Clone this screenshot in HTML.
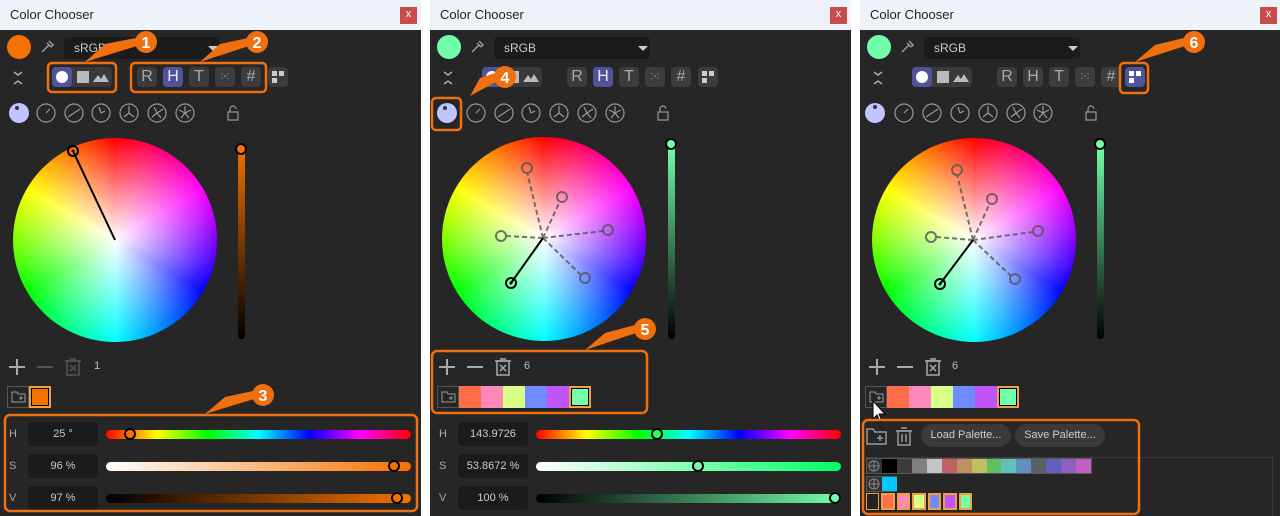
<!DOCTYPE html>
<html><head><meta charset="utf-8"><style>
*{margin:0;padding:0;box-sizing:border-box}
body{width:1280px;height:516px;background:#fff;position:relative;overflow:hidden;font-family:"Liberation Sans",sans-serif}
.p{position:absolute;top:0;width:421px;height:516px;background:#262626;overflow:hidden}
.p *{position:absolute}
.tb{left:0;top:0;width:421px;height:30px;background:#eef3f9;color:#222;font-size:13px;line-height:30px;padding-left:10px}
.cl{left:400px;top:7px;width:17px;height:17px;background:#c74d4d;color:#fff;font-size:11px;line-height:15px;text-align:center}
.cc{left:7px;top:35px;width:24px;height:24px;border-radius:50%}
.dd{left:64px;top:37px;width:156px;height:22px;background:#1b1b1b;border-radius:4px;color:#ccc;font-size:12px;line-height:22px;padding-left:10px}
.dd i{left:144px;top:9px;width:0;height:0;border-left:5px solid transparent;border-right:5px solid transparent;border-top:5px solid #ccc}
.seg{left:52px;top:67px;width:60px;height:20px;background:#3a3a3a;border-radius:4px}
.seg b{left:0;top:0;width:20px;height:20px;background:#4f5499;border-radius:4px}
.btn{top:67px;width:20px;height:20px;background:#3c3c3c;border-radius:4px;color:#aaa;font-size:16px;line-height:20px;text-align:center}
.act{background:#4f5499;color:#e8e8ff}
.lbl{left:9px;color:#aaa;font-size:11px}
.inp{left:28px;width:70px;height:24px;background:#1b1b1b;border-radius:4px;color:#ccc;font-size:11px;line-height:24px;text-align:center}
.tr{left:106px;width:305px;height:9px;border-radius:5px}
.th{width:12px;height:12px;border-radius:50%;border:2px solid #000}
.wh{width:204px;height:204px;border-radius:50%;background:radial-gradient(closest-side,#fff,rgba(255,255,255,0)),conic-gradient(red,#f0f,#00f,#0ff,#0f0,#ff0,red)}
.vb{left:238px;top:145px;width:7px;height:194px;border-radius:4px}
.sw{top:386px;width:22px;height:22px}
.cnt{top:360px;color:#bbb;font-size:11px}
svg{overflow:visible}
</style></head><body>

<!-- PANEL 1 -->
<div class="p" style="left:0">
<div class="tb">Color Chooser</div><div class="cl">x</div>
<div class="cc" style="background:#f57200"></div>
<svg style="left:40px;top:40px" width="14" height="14"><path d="M2 12 L9 5 M7 3 L11 7 M9 1 L13 5 L11 7" stroke="#999" stroke-width="1.5" fill="none"/></svg>
<div class="dd">sRGB<i></i></div>
<svg style="left:12px;top:70px" width="12" height="16"><path d="M2 2 L6 5 L10 2 M2 14 L6 11 L10 14" stroke="#aaa" stroke-width="1.5" fill="none"/></svg>
<div class="seg"><b></b><div style="left:4px;top:4px;width:12px;height:12px;border-radius:50%;background:#fff"></div><div style="left:25px;top:4px;width:12px;height:12px;background:#bbb"></div><svg style="left:41px;top:5px" width="16" height="10"><path d="M0 10 L5 3 L8 7 L11 2 L16 10Z" fill="#bbb"/></svg></div>
<div class="btn" style="left:137px">R</div><div class="btn act" style="left:163px">H</div><div class="btn" style="left:189px">T</div><div class="btn" style="left:215px;font-size:10px">:-:</div><div class="btn" style="left:241px">#</div>
<div class="btn" style="left:268px"><svg style="left:4px;top:4px" width="12" height="12"><rect x="0" y="0" width="5" height="5" fill="#ccc"/><rect x="7" y="0" width="5" height="5" fill="#ccc"/><rect x="0" y="7" width="5" height="5" fill="#ccc"/></svg></div>
<svg style="left:0;top:100px" width="260" height="26"><circle cx="19" cy="13" r="10" fill="#c0c4ff"/><circle cx="17" cy="8" r="2" fill="#334"/>
<g fill="none" stroke="#999" stroke-width="1.2"><circle cx="46" cy="13" r="9"/><circle cx="74" cy="13" r="9"/><circle cx="101" cy="13" r="9"/><circle cx="129" cy="13" r="9"/><circle cx="157" cy="13" r="9"/><circle cx="185" cy="13" r="9"/><path d="M46 13 L50 9 M68 17 L80 9 M101 13 L99 7 M101 13 L105 11 M129 13 L129 6 M129 13 L124 17 M129 13 L134 17 M157 13 L154 7 M157 13 L163 9 M157 13 L152 17 M157 13 L161 18 M185 13 L185 6 M185 13 L191 10 M185 13 L179 10 M185 13 L181 18 M185 13 L189 18"/><rect x="228" y="12" width="10" height="8"/><path d="M230 12 V9 A3 3 0 0 1 236 9"/></g></svg>
<div class="wh" style="left:13px;top:138px"></div>
<svg style="left:0;top:0" width="260" height="350"><line x1="73" y1="151" x2="115" y2="240" stroke="#000" stroke-width="2"/><circle cx="73" cy="151" r="5" fill="none" stroke="#000" stroke-width="2"/><circle cx="73" cy="151" r="1.5"/></svg>
<div class="vb" style="background:linear-gradient(#f57200,#000)"></div>
<div class="th" style="left:235px;top:143px;background:#f57200"></div>
<svg style="left:8px;top:358px" width="90" height="18"><path d="M1 9 H17 M9 1 V17" stroke="#aaa" stroke-width="2"/><path d="M29 9 H45" stroke="#555" stroke-width="2"/><g stroke="#555" stroke-width="1.5" fill="none"><rect x="59" y="3" width="12" height="14"/><path d="M57 3 H73 M62 1 H68 M62 7 L68 13 M68 7 L62 13"/></g></svg>
<div class="cnt" style="left:94px">1</div>
<div class="sw" style="left:7px;border:1px solid #555;background:#262626"><svg style="left:3px;top:4px" width="15" height="12"><path d="M1 1 H6 L7 3 H14 V11 H1Z M8 7 H12 M10 5 V9" stroke="#999" fill="none"/></svg></div>
<div class="sw" style="left:29px;background:#f57200;border:2px solid #f0a040;box-shadow:inset 0 0 0 1px #000"></div>
<div class="lbl" style="top:428px">H</div><div class="inp" style="top:422px">25 °</div><div class="tr" style="top:430px;background:linear-gradient(90deg,red,#ff0,#0f0,#0ff,#00f,#f0f,red)"></div><div class="th" style="left:124px;top:428px;background:#f57200"></div>
<div class="lbl" style="top:460px">S</div><div class="inp" style="top:454px">96 %</div><div class="tr" style="top:462px;background:linear-gradient(90deg,#fff,#f57200)"></div><div class="th" style="left:388px;top:460px;background:#f57200"></div>
<div class="lbl" style="top:492px">V</div><div class="inp" style="top:486px">97 %</div><div class="tr" style="top:494px;background:linear-gradient(90deg,#000,#f57200)"></div><div class="th" style="left:391px;top:492px;background:#f57200"></div>
</div>

<!-- PANEL 2 -->
<div class="p" style="left:430px">
<div class="tb">Color Chooser</div><div class="cl">x</div>
<div class="cc" style="background:#73ffaa"></div>
<svg style="left:40px;top:40px" width="14" height="14"><path d="M2 12 L9 5 M7 3 L11 7 M9 1 L13 5 L11 7" stroke="#999" stroke-width="1.5" fill="none"/></svg>
<div class="dd">sRGB<i></i></div>
<svg style="left:12px;top:70px" width="12" height="16"><path d="M2 2 L6 5 L10 2 M2 14 L6 11 L10 14" stroke="#aaa" stroke-width="1.5" fill="none"/></svg>
<div class="seg"><b></b><div style="left:4px;top:4px;width:12px;height:12px;border-radius:50%;background:#fff"></div><div style="left:25px;top:4px;width:12px;height:12px;background:#bbb"></div><svg style="left:41px;top:5px" width="16" height="10"><path d="M0 10 L5 3 L8 7 L11 2 L16 10Z" fill="#bbb"/></svg></div>
<div class="btn" style="left:137px">R</div><div class="btn act" style="left:163px">H</div><div class="btn" style="left:189px">T</div><div class="btn" style="left:215px;font-size:10px">:-:</div><div class="btn" style="left:241px">#</div>
<div class="btn" style="left:268px"><svg style="left:4px;top:4px" width="12" height="12"><rect x="0" y="0" width="5" height="5" fill="#ccc"/><rect x="7" y="0" width="5" height="5" fill="#ccc"/><rect x="0" y="7" width="5" height="5" fill="#ccc"/></svg></div>
<svg style="left:0;top:100px" width="260" height="26"><circle cx="17" cy="13" r="10" fill="#c0c4ff"/><circle cx="15" cy="8" r="2" fill="#334"/>
<g fill="none" stroke="#999" stroke-width="1.2"><circle cx="46" cy="13" r="9"/><circle cx="74" cy="13" r="9"/><circle cx="101" cy="13" r="9"/><circle cx="129" cy="13" r="9"/><circle cx="157" cy="13" r="9"/><circle cx="185" cy="13" r="9"/><path d="M46 13 L50 9 M68 17 L80 9 M101 13 L99 7 M101 13 L105 11 M129 13 L129 6 M129 13 L124 17 M129 13 L134 17 M157 13 L154 7 M157 13 L163 9 M157 13 L152 17 M157 13 L161 18 M185 13 L185 6 M185 13 L191 10 M185 13 L179 10 M185 13 L181 18 M185 13 L189 18"/><rect x="228" y="12" width="10" height="8"/><path d="M230 12 V9 A3 3 0 0 1 236 9"/></g></svg>
<div class="wh" style="left:12px;top:137px"></div>
<svg style="left:0;top:0" width="260" height="350"><g stroke="#555" stroke-width="2" fill="none" opacity=".8"><path stroke-dasharray="5 3" d="M113 238 L97 172 M113 238 L130 201 M113 238 L76 236 M113 238 L173 231 M113 238 L151 275"/><circle cx="97" cy="168" r="5"/><circle cx="132" cy="197" r="5"/><circle cx="71" cy="236" r="5"/><circle cx="178" cy="230" r="5"/><circle cx="155" cy="278" r="5"/></g><line x1="81" y1="283" x2="113" y2="238" stroke="#000" stroke-width="2"/><circle cx="81" cy="283" r="5" fill="none" stroke="#000" stroke-width="2"/><circle cx="81" cy="283" r="1.5"/></svg>
<div class="vb" style="background:linear-gradient(#73ffaa,#000)"></div>
<div class="th" style="left:235px;top:138px;background:#73ffaa"></div>
<svg style="left:8px;top:358px" width="90" height="18"><path d="M1 9 H17 M9 1 V17 M29 9 H45" stroke="#aaa" stroke-width="2"/><g stroke="#aaa" stroke-width="1.5" fill="none"><rect x="59" y="3" width="12" height="14"/><path d="M57 3 H73 M62 1 H68 M62 7 L68 13 M68 7 L62 13"/></g></svg>
<div class="cnt" style="left:94px">6</div>
<div class="sw" style="left:7px;border:1px solid #555;background:#262626"><svg style="left:3px;top:4px" width="15" height="12"><path d="M1 1 H6 L7 3 H14 V11 H1Z M8 7 H12 M10 5 V9" stroke="#999" fill="none"/></svg></div>
<div class="sw" style="left:29px;background:#ff6e48"></div><div class="sw" style="left:51px;background:#ff88bb"></div><div class="sw" style="left:73px;background:#d8ff88"></div><div class="sw" style="left:95px;background:#6e8cff"></div><div class="sw" style="left:117px;background:#c055ff"></div>
<div class="sw" style="left:139px;background:#73ffaa;border:2px solid #f0a040;box-shadow:inset 0 0 0 1px #000"></div>
<div class="lbl" style="top:428px">H</div><div class="inp" style="top:422px">143.9726</div><div class="tr" style="top:430px;background:linear-gradient(90deg,red,#ff0,#0f0,#0ff,#00f,#f0f,red)"></div><div class="th" style="left:221px;top:428px;background:#2f6"></div>
<div class="lbl" style="top:460px">S</div><div class="inp" style="top:454px">53.8672 %</div><div class="tr" style="top:462px;background:linear-gradient(90deg,#fff,#7fa 55%,#0f6)"></div><div class="th" style="left:262px;top:460px;background:#73ffaa"></div>
<div class="lbl" style="top:492px">V</div><div class="inp" style="top:486px">100 %</div><div class="tr" style="top:494px;background:linear-gradient(90deg,#000,#73ffaa)"></div><div class="th" style="left:399px;top:492px;background:#73ffaa"></div>
</div>

<!-- PANEL 3 -->
<div class="p" style="left:860px;width:420px">
<div class="tb" style="width:420px">Color Chooser</div><div class="cl">x</div>
<div class="cc" style="background:#73ffaa"></div>
<svg style="left:40px;top:40px" width="14" height="14"><path d="M2 12 L9 5 M7 3 L11 7 M9 1 L13 5 L11 7" stroke="#999" stroke-width="1.5" fill="none"/></svg>
<div class="dd">sRGB<i></i></div>
<svg style="left:12px;top:70px" width="12" height="16"><path d="M2 2 L6 5 L10 2 M2 14 L6 11 L10 14" stroke="#aaa" stroke-width="1.5" fill="none"/></svg>
<div class="seg"><b></b><div style="left:4px;top:4px;width:12px;height:12px;border-radius:50%;background:#fff"></div><div style="left:25px;top:4px;width:12px;height:12px;background:#bbb"></div><svg style="left:41px;top:5px" width="16" height="10"><path d="M0 10 L5 3 L8 7 L11 2 L16 10Z" fill="#bbb"/></svg></div>
<div class="btn" style="left:137px">R</div><div class="btn" style="left:163px">H</div><div class="btn" style="left:189px">T</div><div class="btn" style="left:215px;font-size:10px">:-:</div><div class="btn" style="left:241px">#</div>
<div class="btn act" style="left:265px"><svg style="left:4px;top:4px" width="12" height="12"><rect x="0" y="0" width="5" height="5" fill="#fff"/><rect x="7" y="0" width="5" height="5" fill="#fff"/><rect x="0" y="7" width="5" height="5" fill="#fff"/></svg></div>
<svg style="left:0;top:100px" width="260" height="26"><circle cx="15" cy="13" r="10" fill="#c0c4ff"/><circle cx="15" cy="7" r="2" fill="#334"/>
<g fill="none" stroke="#999" stroke-width="1.2"><circle cx="44" cy="13" r="9"/><circle cx="72" cy="13" r="9"/><circle cx="100" cy="13" r="9"/><circle cx="128" cy="13" r="9"/><circle cx="156" cy="13" r="9"/><circle cx="183" cy="13" r="9"/><path d="M44 13 L48 9 M66 17 L78 9 M100 13 L98 7 M100 13 L104 11 M128 13 L128 6 M128 13 L123 17 M128 13 L133 17 M156 13 L153 7 M156 13 L162 9 M156 13 L151 17 M156 13 L160 18 M183 13 L183 6 M183 13 L189 10 M183 13 L177 10 M183 13 L179 18 M183 13 L187 18"/><rect x="226" y="12" width="10" height="8"/><path d="M228 12 V9 A3 3 0 0 1 234 9"/></g></svg>
<div class="wh" style="left:12px;top:138px"></div>
<svg style="left:0;top:0" width="260" height="350"><g stroke="#555" stroke-width="2" fill="none" opacity=".8"><path stroke-dasharray="5 3" d="M113 240 L97 174 M113 240 L130 203 M113 240 L76 237 M113 240 L173 232 M113 240 L151 276"/><circle cx="97" cy="170" r="5"/><circle cx="132" cy="199" r="5"/><circle cx="71" cy="237" r="5"/><circle cx="178" cy="231" r="5"/><circle cx="155" cy="279" r="5"/></g><line x1="80" y1="284" x2="113" y2="240" stroke="#000" stroke-width="2"/><circle cx="80" cy="284" r="5" fill="none" stroke="#000" stroke-width="2"/><circle cx="80" cy="284" r="1.5"/></svg>
<div class="vb" style="left:237px;background:linear-gradient(#73ffaa,#000)"></div>
<div class="th" style="left:234px;top:138px;background:#73ffaa"></div>
<svg style="left:8px;top:358px" width="90" height="18"><path d="M1 9 H17 M9 1 V17 M29 9 H45" stroke="#aaa" stroke-width="2"/><g stroke="#aaa" stroke-width="1.5" fill="none"><rect x="59" y="3" width="12" height="14"/><path d="M57 3 H73 M62 1 H68 M62 7 L68 13 M68 7 L62 13"/></g></svg>
<div class="cnt" style="left:92px">6</div>
<div class="sw" style="left:5px;border:1px solid #555;background:#262626"><svg style="left:3px;top:4px" width="15" height="12"><path d="M1 1 H6 L7 3 H14 V11 H1Z M8 7 H12 M10 5 V9" stroke="#999" fill="none"/></svg></div>
<div class="sw" style="left:27px;background:#ff6e48"></div><div class="sw" style="left:49px;background:#ff88bb"></div><div class="sw" style="left:71px;background:#d8ff88"></div><div class="sw" style="left:93px;background:#6e8cff"></div><div class="sw" style="left:115px;background:#c055ff"></div>
<div class="sw" style="left:137px;background:#73ffaa;border:2px solid #f0a040;box-shadow:inset 0 0 0 1px #000"></div>
<svg style="left:12px;top:400px" width="16" height="24"><path d="M1 1 V19 L5 15 L8 22 L10 21 L7 14 L13 14Z" fill="#fff" stroke="#000"/></svg>
<svg style="left:6px;top:426px" width="50" height="20"><g stroke="#999" stroke-width="1.5" fill="none"><path d="M1 3 H7 L9 6 H20 V18 H1Z M11 12 H17 M14 9 V15"/><rect x="32" y="5" width="12" height="14"/><path d="M30 5 H46 M35 2 H41 M36 8 V16 M40 8 V16"/></g></svg>
<div style="left:61px;top:424px;width:90px;height:23px;border-radius:12px;background:#3a3a3a;color:#ccc;font-size:11px;line-height:23px;text-align:center">Load Palette...</div>
<div style="left:155px;top:424px;width:90px;height:23px;border-radius:12px;background:#3a3a3a;color:#ccc;font-size:11px;line-height:23px;text-align:center">Save Palette...</div>
<div style="left:5px;top:457px;width:408px;height:59px;border-top:1px solid #3a3a3a;border-right:1px solid #3a3a3a"></div>
<div style="left:6px;top:458px;width:226px;height:16px;display:flex;border:1px solid #555">
<span style="position:static;width:15px;background:#333"></span><span style="position:static;width:15px;background:#000"></span><span style="position:static;width:15px;background:#3c3c3c"></span><span style="position:static;width:15px;background:#808080"></span><span style="position:static;width:15px;background:#c4c4c4"></span><span style="position:static;width:15px;background:#c06060"></span><span style="position:static;width:15px;background:#c09060"></span><span style="position:static;width:15px;background:#c0c060"></span><span style="position:static;width:15px;background:#60c060"></span><span style="position:static;width:15px;background:#60c0c0"></span><span style="position:static;width:15px;background:#6090c0"></span><span style="position:static;width:15px;background:#5a6068"></span><span style="position:static;width:15px;background:#6060c0"></span><span style="position:static;width:15px;background:#9060c0"></span><span style="position:static;width:15px;background:#c060c0"></span></div>
<div style="left:6px;top:476px;width:31px;height:16px;border:1px solid #555;background:#333"><span style="left:15px;top:0;width:15px;height:14px;background:#00c8ff"></span></div>
<svg style="left:8px;top:459px" width="14" height="32"><g stroke="#888" fill="none"><circle cx="6" cy="7" r="5"/><path d="M1 7 H11 M6 2 V12"/><circle cx="6" cy="25" r="5"/><path d="M1 25 H11 M6 20 V30"/></g></svg>
<div style="left:6px;top:493px;width:106px;height:17px;display:flex;gap:2px">
<span style="position:static;width:15px;background:#222;border:1px solid #f0a040"></span><span style="position:static;width:15px;background:#ff6e48;border:2px solid #f0a040"></span><span style="position:static;width:15px;background:#ff88bb;border:2px solid #f0a040"></span><span style="position:static;width:15px;background:#d8ff88;border:2px solid #f0a040"></span><span style="position:static;width:15px;background:#6e8cff;border:2px solid #f0a040"></span><span style="position:static;width:15px;background:#c055ff;border:2px solid #f0a040"></span><span style="position:static;width:15px;background:#73ffaa;border:2px solid #f0a040"></span></div>
</div>

<!-- annotations -->
<svg style="position:absolute;left:0;top:0" width="1280" height="516">
<g fill="none" stroke="#f07010" stroke-width="2.5">
<rect x="48" y="63" width="68" height="29" rx="4"/><rect x="131" y="63" width="135" height="29" rx="4"/><rect x="5" y="415" width="412" height="96" rx="5"/>
<rect x="432" y="98" width="29" height="32" rx="4"/><rect x="432" y="351" width="215" height="62" rx="5"/>
<rect x="1120" y="63" width="28" height="30" rx="4"/><rect x="863" y="420" width="276" height="94" rx="5"/>
</g>
<g fill="#f07010">
<path d="M85 62 L105 44 L136 38 L137 46 Z"/><path d="M200 62 L220 44 L248 38 L249 46 Z"/><path d="M205 414 L225 397 L253 391 L254 399 Z"/>
<path d="M470 96 L480 78 L495 73 L496 82 Z"/><path d="M585 350 L605 333 L635 325 L636 333 Z"/><path d="M1135 62 L1155 45 L1184 38 L1185 46 Z"/>
<circle cx="146" cy="42" r="11"/><circle cx="257" cy="42" r="11"/><circle cx="263" cy="395" r="11"/><circle cx="505" cy="77" r="11"/><circle cx="645" cy="329" r="11"/><circle cx="1194" cy="42" r="11"/>
</g>
<g fill="#fff" font-family="Liberation Sans,sans-serif" font-weight="bold" font-size="16" text-anchor="middle">
<text x="146" y="48">1</text><text x="257" y="48">2</text><text x="263" y="401">3</text><text x="505" y="83">4</text><text x="645" y="335">5</text><text x="1194" y="48">6</text></g>
</svg>
</body></html>
